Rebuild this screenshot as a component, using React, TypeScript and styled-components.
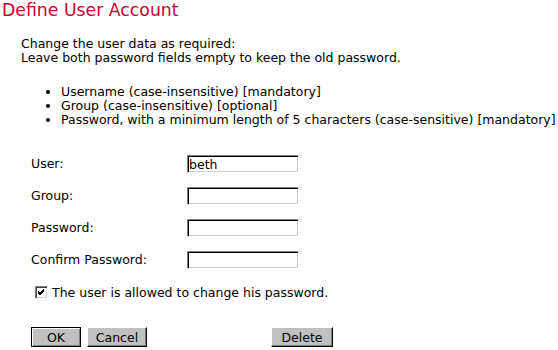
import React from "react";
import styled, { createGlobalStyle } from "styled-components";

const Global = createGlobalStyle`
  html, body { margin: 0; padding: 0; background: #fff; }
  body { font-family: "DejaVu Sans", Verdana, sans-serif; font-size: 12.5px; color: #000; }
`;

const Page = styled.div`
  width: 558px;
  height: 350px;
  overflow: hidden;
  padding: 0 0 0 2px;
  box-sizing: border-box;
`;

const Title = styled.h1`
  margin: 0;
  font-size: 17.3px;
  font-weight: normal;
  line-height: 20px;
  color: #cc0033;
`;

const Content = styled.div`
  padding-left: 19px;
  padding-top: 17px;
`;

const Para = styled.p`
  margin: 0;
  line-height: 14px;
`;

const List = styled.ul`
  margin: 20px 0 0 0;
  padding-left: 40px;
  line-height: 14px;
`;

const Form = styled.div`
  display: grid;
  grid-template-columns: 156px 112px;
  row-gap: 14px;
  align-items: center;
  margin-top: 28px;
  padding-left: 10px;
`;

const Label = styled.label`
  line-height: 18px;
`;

const Input = styled.input`
  width: 112px;
  height: 18px;
  box-sizing: border-box;
  margin: 0;
  padding: 0 1px;
  font-family: "DejaVu Sans", Verdana, sans-serif;
  font-size: 12.5px;
  border-style: solid;
  border-width: 1px;
  border-color: #808080 #fff #fff #808080;
  box-shadow: inset 1px 1px 0 #000, inset -1px -1px 0 #d4d0c8;
  background: #fff;
  outline: none;
`;

const CheckRow = styled.label`
  display: flex;
  align-items: center;
  gap: 4px;
  margin-top: 16px;
  padding-left: 14px;
`;

const Box = styled.span`
  width: 13px;
  height: 13px;
  box-sizing: border-box;
  border: 1px solid;
  border-color: #808080 #fff #fff #808080;
  box-shadow: inset 1px 1px 0 #404040, inset -1px -1px 0 #d4d0c8;
  background: #fff;
  display: flex;
  align-items: center;
  justify-content: center;
`;

const Buttons = styled.div`
  display: flex;
  align-items: center;
  margin-top: 27px;
  padding-left: 10px;
`;

const Button = styled.button<{ $default?: boolean; $width: number; $left?: number }>`
  width: ${(p) => p.$width}px;
  height: 20px;
  margin: 0 0 0 ${(p) => p.$left ?? 0}px;
  padding: 0;
  box-sizing: border-box;
  font-family: "DejaVu Sans", Verdana, sans-serif;
  font-size: 12.5px;
  color: #000;
  background: #c0c0c0;
  border-style: solid;
  border-width: 1px;
  border-color: ${(p) => (p.$default ? "#000" : "#fff #000 #000 #fff")};
  box-shadow: ${(p) =>
    p.$default
      ? "inset 1px 1px 0 #fff, inset -1px -1px 0 #808080"
      : "inset -1px -1px 0 #808080"};
`;

export default function App() {
  return (
    <Page>
      <Global />
      <Title>Define User Account</Title>
      <Content>
        <Para>Change the user data as required:</Para>
        <Para>Leave both password fields empty to keep the old password.</Para>
        <List>
          <li>Username (case-insensitive) [mandatory]</li>
          <li>Group (case-insensitive) [optional]</li>
          <li>Password, with a minimum length of 5 characters (case-sensitive) [mandatory]</li>
        </List>
        <Form>
          <Label>User:</Label>
          <Input defaultValue="beth" />
          <Label>Group:</Label>
          <Input />
          <Label>Password:</Label>
          <Input type="password" />
          <Label>Confirm Password:</Label>
          <Input type="password" />
        </Form>
        <CheckRow>
          <Box>
            <svg width="7" height="7" viewBox="0 0 7 7">
              <path d="M0 2 L2 4 L6 0 M0 3 L2 5 L6 1 M0 4 L2 6 L6 2" stroke="#000" strokeWidth="1" fill="none" shapeRendering="crispEdges" />
            </svg>
          </Box>
          The user is allowed to change his password.
        </CheckRow>
        <Buttons>
          <Button $default $width={50}>OK</Button>
          <Button $width={60} $left={6}>Cancel</Button>
          <Button $width={62} $left={124}>Delete</Button>
        </Buttons>
      </Content>
    </Page>
  );
}
